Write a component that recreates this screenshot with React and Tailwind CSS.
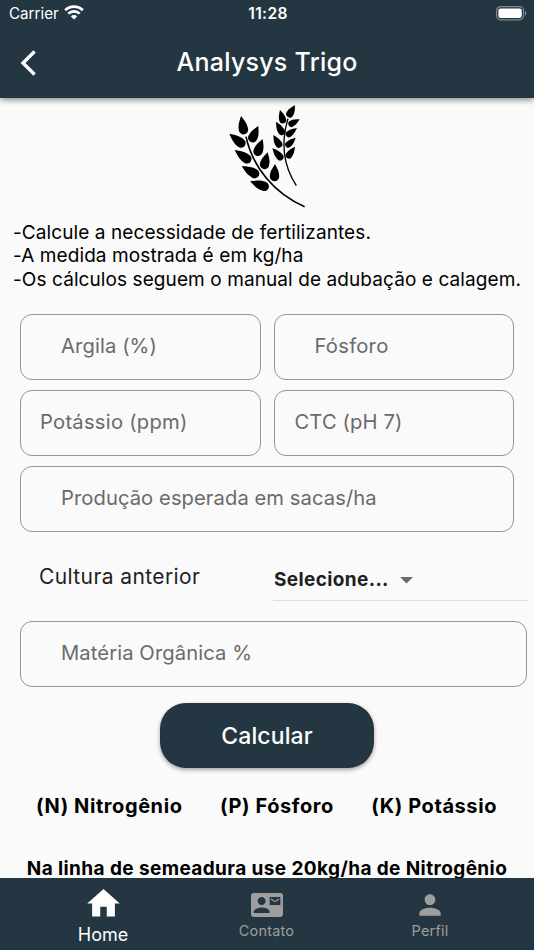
import { useState } from "react";
import { MdHome, MdContactMail, MdPerson, MdArrowDropDown } from "react-icons/md";

// each leaf: tip x, tip y, base x, base y, width
const leaves = [
  [72, 54, 82, 109, 28],
  [124, 84, 101, 132, 28],
  [37, 107, 83, 144, 28],
  [137, 123, 118, 173, 28],
  [53, 156, 101, 191, 28],
  [152, 163, 139, 213, 28],
  [74, 204, 125, 234, 28],
  [174, 198, 172, 250, 28],
  [99, 250, 155, 270, 28],
  [234, 22, 213, 57, 22],
  [189, 36, 200, 76, 21],
  [248, 64, 215, 82, 19],
  [177, 71, 199, 110, 21],
  [240, 90, 208, 114, 19],
  [169, 111, 191, 148, 21],
  [236, 119, 207, 146, 19],
  [166, 150, 196, 185, 21],
  [234, 146, 210, 180, 20],
];

const tabs = [
  { id: "home", label: "Home", icon: MdHome },
  { id: "contato", label: "Contato", icon: MdContactMail },
  { id: "perfil", label: "Perfil", icon: MdPerson },
];

function Leaf({ leaf }) {
  const [tx, ty, bx, by, w] = leaf;
  const len = Math.hypot(bx - tx, by - ty);
  const angle = (Math.atan2(by - ty, bx - tx) * 180) / Math.PI - 90;
  const r = w / 2;
  return (
    <path
      transform={`translate(${tx} ${ty}) rotate(${angle})`}
      d={`M0 0C${r * 0.5} ${len * 0.25} ${r} ${len * 0.42} ${r} ${len - r}A${r} ${r} 0 0 1 ${-r} ${len - r}C${-r} ${len * 0.42} ${-r * 0.5} ${len * 0.25} 0 0Z`}
    />
  );
}

function Wheat() {
  return (
    <svg viewBox="0 0 300 345" className="w-[100px] h-[115px]" fill="#000">
      {leaves.map((leaf, i) => (
        <Leaf key={i} leaf={leaf} />
      ))}
      <path d="M87 116C107 208 172 286 263 326" fill="none" stroke="#000" strokeWidth="5" />
      <path d="M213 62C193 128 197 200 238 263" fill="none" stroke="#000" strokeWidth="4" />
    </svg>
  );
}

function Field({ label, className = "" }) {
  return (
    <div
      className={`h-[66px] pb-[2px] flex items-center border border-[#959595] rounded-[12px] text-[20.2px] text-[#6b6b6b] whitespace-nowrap ${className}`}
    >
      <span>{label}</span>
    </div>
  );
}

export default function App() {
  const [tab, setTab] = useState("home");

  return (
    <div className="w-[534px] h-[950px] flex flex-col overflow-hidden bg-[#fafafa] font-['Inter',sans-serif] text-black">
      <header className="h-[98px] shrink-0 bg-[#233641] text-white shadow-[0_2px_6px_rgba(0,0,0,0.45)] z-10">
        <div className="h-[28px] grid grid-cols-3 items-center pl-[9px] pr-[7px]">
          <div className="flex items-center gap-[5px] text-[15.2px]">
            <span>Carrier</span>
            <svg viewBox="0 0 20 15" className="w-5 h-[15px] mb-[2px]" fill="none" stroke="#fff" strokeWidth="2.7">
              <path d="M1.2 5.3A12.6 12.6 0 0 1 18.8 5.3" />
              <path d="M4.3 8.6A8.2 8.2 0 0 1 15.7 8.6" />
              <path d="M10 14.6L6.8 11.4A4.6 4.6 0 0 1 13.2 11.4Z" fill="#fff" stroke="none" />
            </svg>
          </div>
          <span className="text-center text-[15.5px] font-semibold tracking-[0.4px]">11:28</span>
          <svg viewBox="0 0 32 16" className="w-8 h-4 mb-[2px] justify-self-end">
            <rect x="1.6" y="1.6" width="27" height="13.2" rx="4" fill="none" stroke="#7e8a91" strokeWidth="1.2" />
            <rect x="3.4" y="3.4" width="23.4" height="9.6" rx="2.2" fill="#fff" />
            <path d="M30 5.8C31.9 6.6 31.9 9.8 30 10.6Z" fill="#7e8a91" />
          </svg>
        </div>
        <div className="h-[69px] grid grid-cols-[60px_1fr_60px] items-center">
          <svg viewBox="0 0 16 26" className="w-4 h-[26px] ml-[20px]" fill="none" stroke="#fff" strokeWidth="3.4">
            <path d="M14.6 1.5L3 13L14.6 24.5" />
          </svg>
          <h1 className="text-center text-[25px] font-medium tracking-[0.25px]">Analysys Trigo</h1>
        </div>
      </header>

      <main className="flex-1 min-h-0 overflow-hidden">
        <div className="flex justify-center h-[123px]">
          <Wheat />
        </div>

        <div className="pl-[13px] text-[19px] leading-[23.3px] tracking-[0.09px] whitespace-nowrap">
          <p>-Calcule a necessidade de fertilizantes.</p>
          <p>-A medida mostrada é em kg/ha</p>
          <p>-Os cálculos seguem o manual de adubação e calagem.</p>
        </div>

        <div className="mt-[23px] ml-[20px] mr-[20px] grid grid-cols-2 gap-x-[13px] gap-y-[10px]">
          <Field label="Argila (%)" className="pl-[40px] tracking-[0.11px]" />
          <Field label="Fósforo" className="pl-[40px] tracking-[0.25px]" />
          <Field label="Potássio (ppm)" className="pl-[19px] tracking-[0.25px]" />
          <Field label="CTC (pH 7)" className="pl-[20px] tracking-[0.11px]" />
          <Field label="Produção esperada em sacas/ha" className="pl-[40px] tracking-[0.07px] col-span-2" />
        </div>

        <div className="h-[89px] pl-[39px] pr-[6px] grid grid-cols-[234px_1fr]">
          <span className="pt-[31px] text-[21px] leading-[28px] tracking-[0.4px] text-[#1f1f1f]">Cultura anterior</span>
          <button className="mt-[27px] h-[42px] flex items-center border-b border-[#dedede] text-[19px] font-bold tracking-[0.37px] text-[#1f1f1f]">
            <span className="ml-px mt-px">Selecione...</span>
            <MdArrowDropDown className="w-[31px] h-[31px] ml-[2px] text-[#6b6b6b]" />
          </button>
        </div>

        <div className="ml-[20px] mr-[7px]">
          <Field label="Matéria Orgânica %" className="pl-[40px] tracking-[0.1px]" />
        </div>

        <div className="mt-[16px] flex justify-center">
          <button className="w-[214px] h-[65px] pt-[2px] rounded-[26px] bg-[#233641] text-white text-[23px] font-medium tracking-[0.1px] shadow-[0_2px_4px_rgba(0,0,0,0.35)]">
            Calcular
          </button>
        </div>

        <div className="mt-[24px] pl-[36px] pr-[37px] flex justify-between text-[20px] leading-[28px] font-bold tracking-[0.58px] whitespace-nowrap">
          <span>(N) Nitrogênio</span>
          <span>(P) Fósforo</span>
          <span>(K) Potássio</span>
        </div>
        <p className="mt-[35px] text-center text-[19px] leading-[28px] font-bold tracking-[0.4px] whitespace-nowrap">
          Na linha de semeadura use 20kg/ha de Nitrogênio
        </p>
      </main>

      <nav className="h-[72px] shrink-0 bg-[#233641] grid grid-cols-[206px_121px_206px]">
        {tabs.map(({ id, label, icon: Icon }) => {
          const active = tab === id;
          return (
            <button
              key={id}
              onClick={() => setTab(id)}
              className={`flex flex-col items-center ${active ? "text-white" : "text-[#9e9e9e]"}`}
            >
              <Icon className={active ? "w-[39px] h-[39px] mt-[6px]" : "w-[32px] h-[32px] mt-[11px]"} />
              <span className={active ? "text-[18px] leading-[23px]" : "text-[14.5px] leading-[20px] tracking-[0.2px]"}>
                {label}
              </span>
            </button>
          );
        })}
      </nav>
    </div>
  );
}
